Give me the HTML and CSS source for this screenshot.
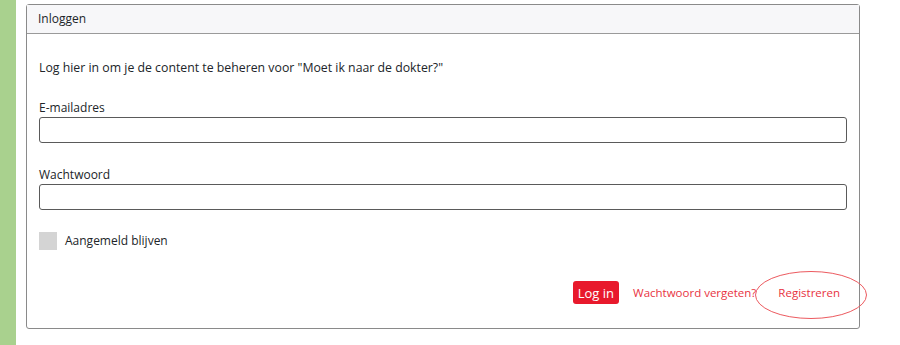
FILE: index.html
```html
<!DOCTYPE html>
<html lang="nl">
<head>
    <meta charset="UTF-8">
    <meta name="viewport" content="width=device-width, initial-scale=1.0">
    <title>Inloggen</title>
    <link rel="stylesheet" href="styles.css">
</head>
<body>
    <div class="page">
        <div class="side-bar"></div>
        <div class="card">
            <div class="card-header">Inloggen</div>
            <form class="card-body">
                <p class="intro">Log hier in om je de content te beheren voor "Moet ik naar de dokter?"</p>

                <div class="field">
                    <label for="email">E-mailadres</label>
                    <input type="email" id="email">
                </div>

                <div class="field">
                    <label for="password">Wachtwoord</label>
                    <input type="password" id="password">
                </div>

                <label class="remember">
                    <span class="check-box"></span>
                    Aangemeld blijven
                </label>

                <div class="actions">
                    <button type="button" class="btn-login">Log in</button>
                    <a href="#" class="link">Wachtwoord vergeten?</a>
                    <span class="register-wrap">
                        <a href="#" class="link">Registreren</a>
                        <svg class="circle-mark" width="114" height="50" viewBox="0 0 114 50">
                            <ellipse cx="57" cy="25" rx="55.5" ry="23.5" fill="none" stroke="#ec5a5f" stroke-width="1"/>
                        </svg>
                    </span>
                </div>
            </form>
        </div>
    </div>
</body>
</html>
```

FILE: styles.css
```css
body {
    margin: 0;
    padding: 0;
    font-family: "Open Sans", "Noto Sans", sans-serif;
    font-size: 12px;
    color: #212529;
    background-color: #fff;
}

.page {
    display: flex;
    height: 345px;
}

.side-bar {
    width: 16px;
    background-color: #a9d18e;
}

.card {
    margin: 4px 0 0 10px;
    width: 832px;
    height: 323px;
    border: 1px solid #8a8a8a;
    border-radius: 3px;
    display: flex;
    flex-direction: column;
}

.card-header {
    height: 28px;
    line-height: 28px;
    padding-left: 11px;
    background-color: #f7f7f9;
    border-bottom: 1px solid #9a9a9a;
}

.card-body {
    flex: 1;
    padding: 0 12px;
    display: flex;
    flex-direction: column;
}

.intro {
    margin: 25px 0 0;
    line-height: 18px;
    font-size: 12.3px;
}

.field {
    margin-top: 22px;
    display: flex;
    flex-direction: column;
}

.field + .field {
    margin-top: 23px;
}

.field label {
    line-height: 18px;
    margin-bottom: 0;
}

.field input {
    box-sizing: border-box;
    height: 26px;
    border: 1px solid #5a5a5a;
    border-radius: 3px;
    margin: 0;
    padding: 0 6px;
}

.remember {
    margin-top: 22px;
    display: flex;
    align-items: center;
    gap: 8px;
    line-height: 18px;
}

.check-box {
    width: 18px;
    height: 18px;
    background-color: #d4d4d4;
}

.actions {
    margin-top: 31px;
    display: flex;
    justify-content: flex-end;
    align-items: center;
    gap: 14px;
    padding-right: 7px;
}

.btn-login {
    font-family: inherit;
    font-size: 13px;
    color: #fff;
    background-color: #e8192c;
    border: none;
    border-radius: 3px;
    height: 23px;
    padding: 0 5px;
}

.link {
    color: #e8333f;
    text-decoration: none;
    font-size: 11.5px;
}

.register-wrap {
    position: relative;
    margin-left: 8px;
}

.circle-mark {
    position: absolute;
    left: -24px;
    top: -14px;
}
```
